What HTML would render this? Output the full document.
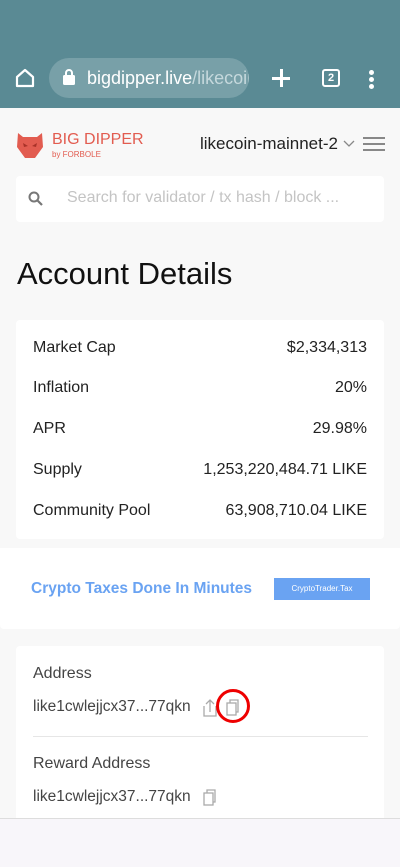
<!DOCTYPE html>
<html><head><style>
*{margin:0;padding:0;box-sizing:border-box}
body{width:400px;height:867px;overflow:hidden;background:#f8f8f8;font-family:"Liberation Sans",sans-serif;color:#333;position:relative}
.top{position:absolute;left:0;top:0;width:400px;height:108px;background:#5a8a94}
.url{position:absolute;left:49px;top:58px;width:200px;height:40px;border-radius:20px;background:#78a0a8;color:#fff;font-size:18px;line-height:40px;padding-left:38px;white-space:nowrap;overflow:hidden}
.url span{color:#c5d8dc}
.card{position:absolute;background:#fff;border-radius:4px}
.row{position:absolute;left:33px;right:33px;font-size:16px;display:flex;justify-content:space-between;color:#222}
</style></head><body>
<div class="top"></div>
<svg style="position:absolute;left:14px;top:67px" width="22" height="22" viewBox="0 0 22 22"><path d="M3 10 L11 3 L19 10 V19 H3 Z" fill="none" stroke="#fff" stroke-width="2.2" stroke-linejoin="round"/></svg>
<div class="url">bigdipper.live<span>/likecoin</span></div>
<svg style="position:absolute;left:62px;top:69px" width="14" height="16"><rect x="1" y="6" width="12" height="10" rx="1.5" fill="#fff"/><path d="M4 7V4a3 3 0 0 1 6 0v3" fill="none" stroke="#fff" stroke-width="2"/></svg>
<div style="position:absolute;left:272px;top:77px;width:18px;height:2.5px;background:#fff"></div>
<div style="position:absolute;left:280px;top:69px;width:2.5px;height:18px;background:#fff"></div>
<div style="position:absolute;left:322px;top:69px;width:18px;height:18px;border:2px solid #fff;border-radius:3px;color:#fff;font-size:11px;font-weight:bold;text-align:center;line-height:14px">2</div>
<div style="position:absolute;left:369px;top:70px;width:5px;height:5px;border-radius:50%;background:#fff;box-shadow:0 7px 0 #fff,0 14px 0 #fff"></div>

<svg style="position:absolute;left:15px;top:130px" width="30" height="30" viewBox="0 0 30 30"><path d="M3 3 L8 7 H22 L27 3 L28 17 L20 28 H10 L2 17 Z" fill="#e25c50"/><path d="M8 13 L13 16 L9 17Z M22 13 L17 16 L21 17Z" fill="#a83228"/></svg>
<div style="position:absolute;left:52px;top:131px;color:#e25c50;font-size:16px">BIG DIPPER</div>
<div style="position:absolute;left:52px;top:150px;color:#e25c50;font-size:8px">by FORBOLE</div>
<div style="position:absolute;left:200px;top:134px;font-size:17px;color:#222">likecoin-mainnet-2</div>
<svg style="position:absolute;left:343px;top:140px" width="12" height="8"><path d="M1 1 L6 6 L11 1" fill="none" stroke="#888" stroke-width="1.3"/></svg>
<div style="position:absolute;left:363px;top:137px;width:22px;height:2px;background:#888;box-shadow:0 6px 0 #888,0 12px 0 #888"></div>

<div class="card" style="left:16px;top:176px;width:368px;height:46px"></div>
<svg style="position:absolute;left:28px;top:191px" width="16" height="16"><circle cx="6" cy="6" r="4.5" fill="none" stroke="#777" stroke-width="2"/><path d="M9.5 9.5 L14 14" stroke="#777" stroke-width="2.2"/></svg>
<div style="position:absolute;left:67px;top:189px;font-size:16px;color:#c4c4c4">Search for validator / tx hash / block ...</div>

<div style="position:absolute;left:17px;top:256px;font-size:31px;color:#111">Account Details</div>

<div class="card" style="left:16px;top:320px;width:368px;height:219px"></div>
<div class="row" style="top:339px"><span>Market Cap</span><span>$2,334,313</span></div>
<div class="row" style="top:379px"><span>Inflation</span><span>20%</span></div>
<div class="row" style="top:420px"><span>APR</span><span>29.98%</span></div>
<div class="row" style="top:461px"><span>Supply</span><span>1,253,220,484.71 LIKE</span></div>
<div class="row" style="top:502px"><span>Community Pool</span><span>63,908,710.04 LIKE</span></div>

<div class="card" style="left:0;top:548px;width:400px;height:81px;border-radius:0 0 4px 4px"></div>
<div style="position:absolute;left:31px;top:580px;font-size:15.5px;font-weight:bold;color:#6aa3f2">Crypto Taxes Done In Minutes</div>
<div style="position:absolute;left:274px;top:578px;width:96px;height:22px;background:#6aa3f2;color:#fff;font-size:8px;text-align:center;line-height:22px">CryptoTrader.Tax</div>

<div class="card" style="left:16px;top:646px;width:368px;height:180px"></div>
<div style="position:absolute;left:33px;top:665px;font-size:16px;color:#444">Address</div>
<div style="position:absolute;left:33px;top:698px;font-size:15.5px;color:#444">like1cwlejjcx37...77qkn</div>
<svg style="position:absolute;left:202px;top:698px" width="16" height="20"><path d="M2 8 V18 H14 V8 M8 14 V2 M4 6 L8 2 L12 6" fill="none" stroke="#aaa" stroke-width="1.3"/></svg>
<svg style="position:absolute;left:225px;top:698px" width="16" height="20"><rect x="2" y="5" width="9" height="12" fill="none" stroke="#aaa" stroke-width="1.3"/><path d="M5 5 V2 H13 V14 H11" fill="none" stroke="#aaa" stroke-width="1.3"/></svg>
<div style="position:absolute;left:216px;top:689px;width:34px;height:34px;border:3px solid #e00;border-radius:50%"></div>
<div style="position:absolute;left:33px;top:736px;width:335px;height:1px;background:#e6e6e6"></div>
<div style="position:absolute;left:33px;top:755px;font-size:16px;color:#444">Reward Address</div>
<div style="position:absolute;left:33px;top:788px;font-size:15.5px;color:#444">like1cwlejjcx37...77qkn</div>
<svg style="position:absolute;left:202px;top:788px" width="16" height="20"><rect x="2" y="5" width="9" height="12" fill="none" stroke="#aaa" stroke-width="1.3"/><path d="M5 5 V2 H13 V14 H11" fill="none" stroke="#aaa" stroke-width="1.3"/></svg>
<div style="position:absolute;left:0;top:818px;width:400px;height:49px;background:#f8f6fa;border-top:1px solid #ddd"></div>
</body></html>
